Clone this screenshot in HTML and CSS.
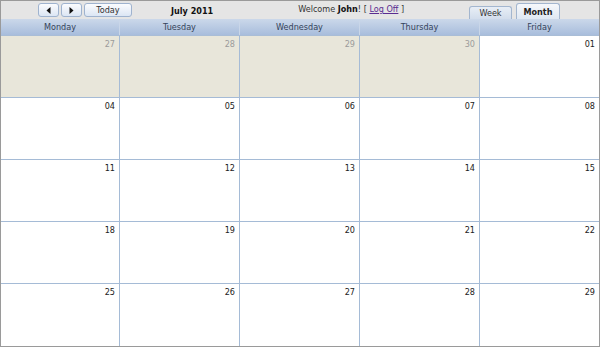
FILE: index.html
```html
<!DOCTYPE html>
<html lang="en">
<head>
  <meta charset="UTF-8" />
  <title>Calendar - July 2011</title>
  <link rel="stylesheet" href="styles.css">
</head>
<body>
  <div class="scheduler">
    <div class="toolbar">
      <div class="nav">
        <button class="nav-btn arrow" title="Previous">
          <svg width="5" height="7" viewBox="0 0 5 7"><path d="M4.5 0 L4.5 7 L0.5 3.5 Z" fill="#111"/></svg>
        </button>
        <button class="nav-btn arrow" title="Next">
          <svg width="5" height="7" viewBox="0 0 5 7"><path d="M0.5 0 L0.5 7 L4.5 3.5 Z" fill="#111"/></svg>
        </button>
        <button class="nav-btn today">Today</button>
      </div>
      <div class="title">July 2011</div>
      <div class="welcome">Welcome <b>John</b>! [ <a href="#">Log Off</a> ]</div>
      <div class="tabs">
        <div class="tab">Week</div>
        <div class="tab active">Month</div>
      </div>
    </div>

    <div class="days">
      <div class="day">Monday</div>
      <div class="day">Tuesday</div>
      <div class="day">Wednesday</div>
      <div class="day">Thursday</div>
      <div class="day">Friday</div>
    </div>

    <div class="month" id="month"></div>
  </div>

  <script>
    // first row starts in June
    const cells = [
      [27, true], [28, true], [29, true], [30, true], ['01', false],
      ['04'], ['05'], ['06'], ['07'], ['08'],
      [11], [12], [13], [14], [15],
      [18], [19], [20], [21], [22],
      [25], [26], [27], [28], [29]
    ];
    const month = document.getElementById('month');
    cells.forEach(([n, other]) => {
      const c = document.createElement('div');
      c.className = other ? 'cell other' : 'cell';
      c.innerHTML = `<span class="num">${n}</span>`;
      month.appendChild(c);
    });
  </script>
</body>
</html>
```

FILE: styles.css
```css
body { margin: 0; background: #fff; font-family: "DejaVu Sans Condensed", "DejaVu Sans", sans-serif; font-size: 8.5px; color: #222; }
.scheduler { width: 598px; height: 345px; border: 1px solid #9a9a9a; display: flex; flex-direction: column; overflow: hidden; }

.toolbar { height: 18px; background: #e5e5e5; display: flex; align-items: stretch; }
.nav { display: flex; gap: 2px; padding: 2px 0 0 37px; }
.nav-btn { height: 14px; margin: 0; padding: 0; border: 1px solid #9fb3cf; border-radius: 3px; background: linear-gradient(#fbfcfe, #dce6f4); font: inherit; font-size: 9px; color: #333; display: flex; align-items: center; justify-content: center; }
.nav-btn.arrow { width: 21px; }
.nav-btn.today { width: 48px; }
.title { font-weight: bold; font-size: 9px; margin-left: 39px; line-height: 20px; color: #111; }
.welcome { margin-left: 85px; line-height: 17px; font-size: 9px; color: #333; }
.welcome b { color: #111; }
.welcome a { color: #5a2c91; }
.tabs { display: flex; align-items: flex-end; gap: 4px; margin-left: auto; margin-right: 39px; }
.tab { box-sizing: border-box; width: 43px; height: 13px; line-height: 13px; text-align: center; font-size: 9px; border: 1px solid #a3b6cf; border-bottom: none; border-radius: 3px 3px 0 0; background: linear-gradient(#e8eef6, #d2ddec); color: #333; }
.tab.active { width: 44px; height: 16px; line-height: 16px; background: linear-gradient(#f6f8fb, #dfe8f3); font-weight: bold; color: #222; }

.days { height: 16px; display: grid; grid-template-columns: 119px 120px 120px 120px 1fr; background: linear-gradient(#cbd8ea, #a8bddc); }
.day { text-align: center; line-height: 16px; font-size: 9px; color: #34435a; border-right: 1px solid #c9d6e8; }
.day:last-child { border-right: none; }

.month { flex: 1; display: grid; grid-template-columns: 119px 120px 120px 120px 1fr; grid-template-rows: repeat(5, 1fr); border-top: 1px solid #a9bdd6; }
.cell { border-right: 1px solid #a5bbd6; border-bottom: 1px solid #a5bbd6; text-align: right; padding: 3px 4px 0 0; font-size: 9px; }
.cell:nth-child(5n) { border-right: none; }
.cell:nth-last-child(-n+5) { border-bottom: none; }
.cell.other { background: #e8e6da; }
.num { color: #222; }
.cell.other .num { color: #9b9b9b; }
```
